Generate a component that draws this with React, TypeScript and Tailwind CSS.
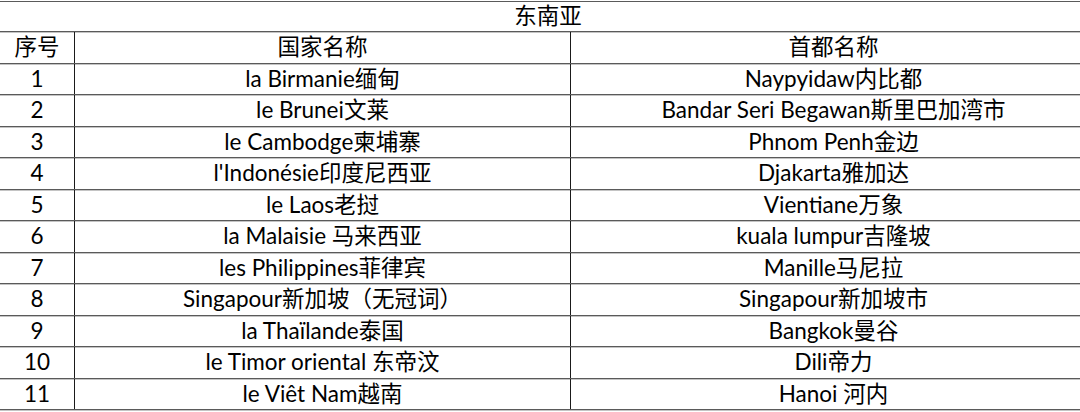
import React from "react";

// 东南亚国家及首都表
const ROWS: [string, string, string][] = [
  ["1", "la Birmanie缅甸", "Naypyidaw内比都"],
  ["2", "le Brunei文莱", "Bandar Seri Begawan斯里巴加湾市"],
  ["3", "le Cambodge柬埔寨", "Phnom Penh金边"],
  ["4", "l'Indonésie印度尼西亚", "Djakarta雅加达"],
  ["5", "le Laos老挝", "Vientiane万象"],
  ["6", "la Malaisie 马来西亚", "kuala lumpur吉隆坡"],
  ["7", "les Philippines菲律宾", "Manille马尼拉"],
  ["8", "Singapour新加坡（无冠词）", "Singapour新加坡市"],
  ["9", "la Thaïlande泰国", "Bangkok曼谷"],
  ["10", "le Timor oriental 东帝汶", "Dili帝力"],
  ["11", "le Viêt Nam越南", "Hanoi 河内"],
];

// 行高交替 31/32, 与原图的网格线对齐
const HEIGHTS = [31, 32, 31, 32, 31, 32, 31, 32, 31, 32, 31];

const LINE = "border-b border-[#5a5a5a] shadow-[0_1px_0_#c4c4c4]";

function Row({ cells, h }: { cells: [string, string, string]; h: number }) {
  return (
    <div className={`grid grid-cols-[74px_496px_526px] ${LINE}`} style={{ height: h }}>
      <div className="flex items-center justify-center">{cells[0]}</div>
      <div className="flex items-center justify-center border-l border-[#1a1a1a]">{cells[1]}</div>
      <div className="flex items-center justify-center border-l border-[#1a1a1a]">{cells[2]}</div>
    </div>
  );
}

export default function App() {
  return (
    <div
      className="w-[1080px] h-[412px] bg-white text-[22.5px] leading-none text-black overflow-hidden"
      style={{ fontFamily: '"Lato", "Noto Sans CJK SC", sans-serif' }}
    >
      <div className="h-px" />
      <div className="w-[1096px] border-t border-[#5a5a5a]">
        <div className="grid grid-cols-[570px_526px]">
          <div className={`col-span-2 flex items-center justify-center ${LINE}`} style={{ height: 30 }}>
            <span className="w-[1080px] text-center">东南亚</span>
          </div>
        </div>
        <Row cells={["序号", "国家名称", "首都名称"]} h={32} />
        {ROWS.map((r, i) => (
          <Row key={r[0]} cells={r} h={HEIGHTS[i]} />
        ))}
      </div>
    </div>
  );
}
